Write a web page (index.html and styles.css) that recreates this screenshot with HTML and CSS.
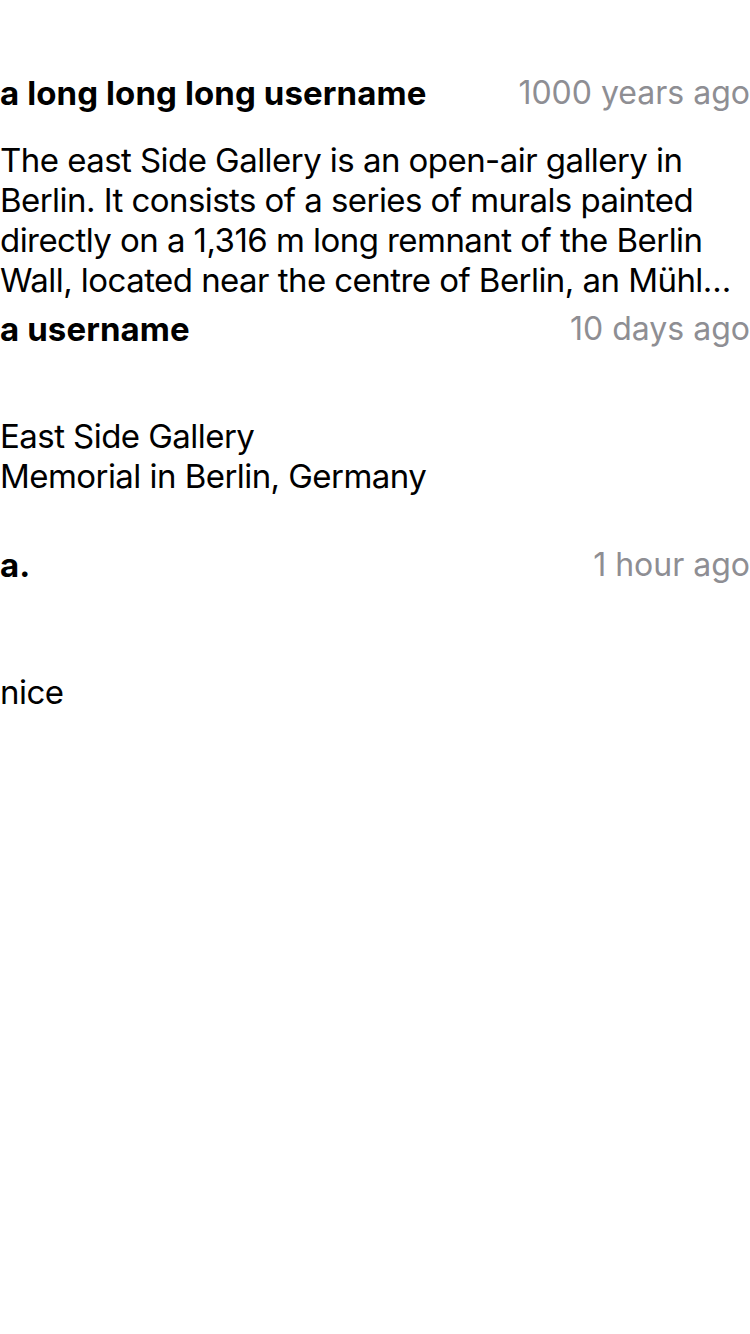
FILE: index.html
```html
<!DOCTYPE html>
<html>
<head>
<meta charset="utf-8">
<link rel="stylesheet" href="styles.css">
</head>
<body>
<div class="list">
  <div class="item">
    <div class="header">
      <span class="user">a long long long username</span>
      <span class="time">1000 years ago</span>
    </div>
    <div class="content">
      <p class="text">The east Side Gallery is an open-air gallery in<br>Berlin. It consists of a series of murals painted<br>directly on a 1,316 m long remnant of the Berlin<br>Wall, located near the centre of Berlin, an Mühl…</p>
    </div>
  </div>
  <div class="item">
    <div class="header">
      <span class="user">a username</span>
      <span class="time">10 days ago</span>
    </div>
    <div class="content">
      <p class="text">East Side Gallery<br>Memorial in Berlin, Germany</p>
    </div>
  </div>
  <div class="item">
    <div class="header">
      <span class="user">a.</span>
      <span class="time">1 hour ago</span>
    </div>
    <div class="content">
      <p class="text">nice</p>
    </div>
  </div>
</div>
</body>
</html>
```
FILE: styles.css
```css
html, body {
  margin: 0;
  padding: 0;
  background: #ffffff;
}
body {
  font-family: Inter, "Noto Sans", "Liberation Sans", sans-serif;
  color: #000000;
}
.list {
  padding-top: 73px;
  display: flex;
  flex-direction: column;
}
.item {
  height: 236px;
  display: flex;
  flex-direction: column;
}
.header {
  height: 40px;
  display: flex;
  justify-content: space-between;
  align-items: center;
}
.user {
  font-weight: 700;
  font-size: 33px;
  line-height: 40px;
  letter-spacing: 0.1px;
}
.time {
  font-size: 32px;
  line-height: 40px;
  color: #8e8e93;
}
.content {
  flex: 1;
  padding-top: 18px;
  display: flex;
  align-items: center;
}
.text {
  margin: 0;
  font-size: 33px;
  line-height: 40px;
  letter-spacing: -0.55px;
  white-space: nowrap;
}
```
